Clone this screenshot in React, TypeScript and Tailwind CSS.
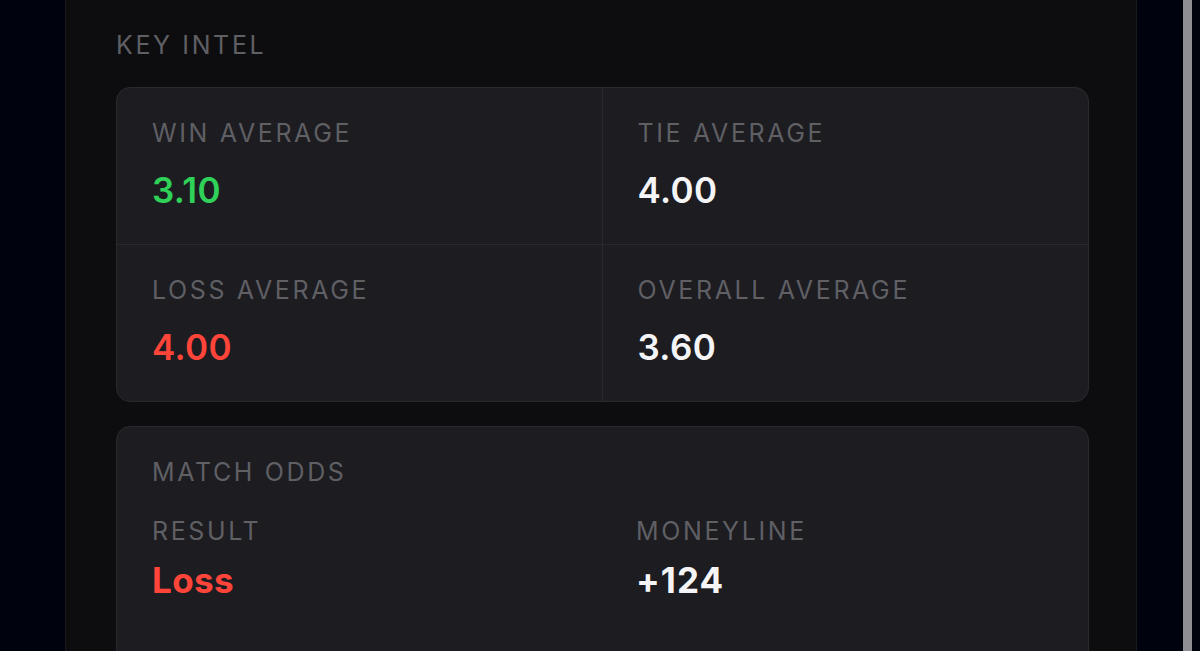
import React from 'react';

type Stat = { label: string; value: string; tone: 'green' | 'red' | 'white' };

const stats: Stat[] = [
  { label: 'WIN AVERAGE', value: '3.10', tone: 'green' },
  { label: 'TIE AVERAGE', value: '4.00', tone: 'white' },
  { label: 'LOSS AVERAGE', value: '4.00', tone: 'red' },
  { label: 'OVERALL AVERAGE', value: '3.60', tone: 'white' },
];

const toneClass = {
  green: 'text-[#30d158]',
  red: 'text-[#ff453a]',
  white: 'text-[#f5f5f7]',
};

const Label: React.FC<{ children: React.ReactNode }> = ({ children }) => (
  <div className="text-[25px] leading-[30px] tracking-[0.105em] text-[#5f5f64]">{children}</div>
);

export default function App() {
  return (
    <div
      className="flex h-[651px] w-[1200px] overflow-hidden bg-[#00030d]"
      style={{ fontFamily: 'Inter, "Noto Sans", sans-serif' }}
    >
      <div className="w-[65px] shrink-0" />
      <div className="w-[1072px] shrink-0 border-x border-[#19191b] bg-[#0d0d0f] pl-[50px] pr-[47px] pt-[30px]">
        <div className="mb-[27px] text-[25px] leading-[30px] tracking-[0.105em] text-[#5f5f64]">KEY INTEL</div>

        <div className="grid grid-cols-2 overflow-hidden rounded-[14px] border border-[#2a2a2e] bg-[#1c1c21]">
          {stats.map((s, i) => (
            <div
              key={s.label}
              className={`px-[35px] pt-[30px] pb-[34px] ${i % 2 === 0 ? 'border-r border-[#2a2a2e]' : ''} ${i < 2 ? 'border-b border-[#2a2a2e]' : ''}`}
            >
              <Label>{s.label}</Label>
              <div className={`mt-[22px] text-[35px] font-semibold leading-[40px] tracking-[0.01em] ${toneClass[s.tone]}`}>{s.value}</div>
            </div>
          ))}
        </div>

        <div className="mt-[24px] h-[300px] rounded-[14px] border border-[#2a2a2e] bg-[#1c1c21] px-[35px] pt-[30px]">
          <Label>MATCH ODDS</Label>
          <div className="mt-[29px] grid grid-cols-[450px_1fr] gap-[34px]">
            <div>
              <Label>RESULT</Label>
              <div className="mt-[14px] text-[35px] font-bold leading-[40px] tracking-[0.01em] text-[#ff453a]">Loss</div>
            </div>
            <div>
              <Label>MONEYLINE</Label>
              <div className="mt-[14px] text-[35px] font-bold leading-[40px] tracking-[0.03em] text-[#f5f5f7]">+124</div>
            </div>
          </div>
        </div>
      </div>
      <div className="flex-1" />
      <div className="w-[9px] shrink-0 bg-[#8e8e93]" />
      <div className="w-[8px] shrink-0" />
    </div>
  );
}
